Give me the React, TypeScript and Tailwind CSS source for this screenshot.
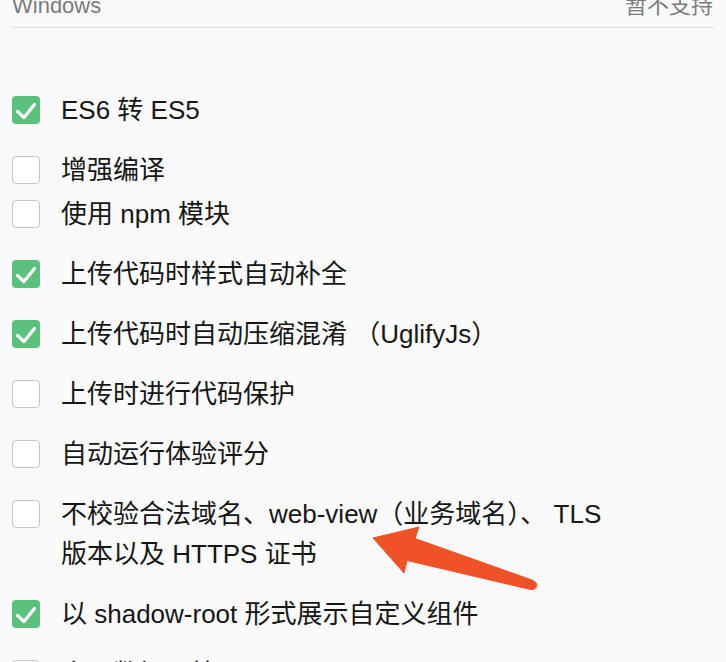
import React from "react";

const font = { fontFamily: '"Liberation Sans", "Noto Sans CJK SC", sans-serif' };

function Box({ checked }: { checked: boolean }) {
  if (checked) {
    return (
      <div className="mt-[6px] flex h-[28px] w-[28px] shrink-0 items-center justify-center rounded-[4px] bg-[#59c17b]">
        <svg width="28" height="28" viewBox="0 0 28 28">
          <path d="M5.5 15.5 L12 21.5 L22.5 8.5" fill="none" stroke="#ffffff" strokeWidth="3.4" strokeLinecap="round" strokeLinejoin="round" />
        </svg>
      </div>
    );
  }
  return <div className="mt-[6px] h-[28px] w-[28px] shrink-0 rounded-[4px] border border-[#c6c6c6] bg-white" />;
}

function Row({ checked, children, mt }: { checked: boolean; children: React.ReactNode; mt: string }) {
  return (
    <div className={`flex items-start gap-[21px] ${mt}`}>
      <Box checked={checked} />
      <div className="text-[26px] leading-[40px] text-[#161616]">{children}</div>
    </div>
  );
}

export default function App() {
  return (
    <div className="relative h-[662px] w-[726px] overflow-hidden bg-[#fafafa]" style={font}>
      <div className="mx-[12px] mt-[-5px] flex justify-between border-b border-[#dedede] pb-[10px] text-[22px] leading-[22px] text-[#7b7b7b]">
        <span>Windows</span>
        <span className="mr-[1px]">暂不支持</span>
      </div>
      <div className="pl-[12px]">
        <Row checked mt="mt-[62px]">ES6 转 ES5</Row>
        <Row checked={false} mt="mt-[20px]">增强编译</Row>
        <Row checked={false} mt="mt-[4px]">使用 npm 模块</Row>
        <Row checked mt="mt-[20px]">上传代码时样式自动补全</Row>
        <Row checked mt="mt-[20px]">上传代码时自动压缩混淆 （UglifyJs）</Row>
        <Row checked={false} mt="mt-[20px]">上传时进行代码保护</Row>
        <Row checked={false} mt="mt-[20px]">自动运行体验评分</Row>
        <Row checked={false} mt="mt-[20px]">
          不校验合法域名、web-view（业务域名）、 TLS
          <br />
          版本以及 HTTPS 证书
        </Row>
        <Row checked mt="mt-[20px]">以 shadow-root 形式展示自定义组件</Row>
        <Row checked={false} mt="mt-[20px]">启用数据预拉取</Row>
      </div>
      <svg className="pointer-events-none absolute left-0 top-0" width="726" height="662" viewBox="0 0 726 662">
        <path
          d="M373 538 L419 527 L415 538.5 L532 580 Q538 582.5 536.5 587 Q535 590 530.5 589.5 L407 560.5 L404 573 Z"
          fill="#f05228"
          stroke="#f05228"
          strokeWidth="1"
          strokeLinejoin="round"
        />
      </svg>
    </div>
  );
}
